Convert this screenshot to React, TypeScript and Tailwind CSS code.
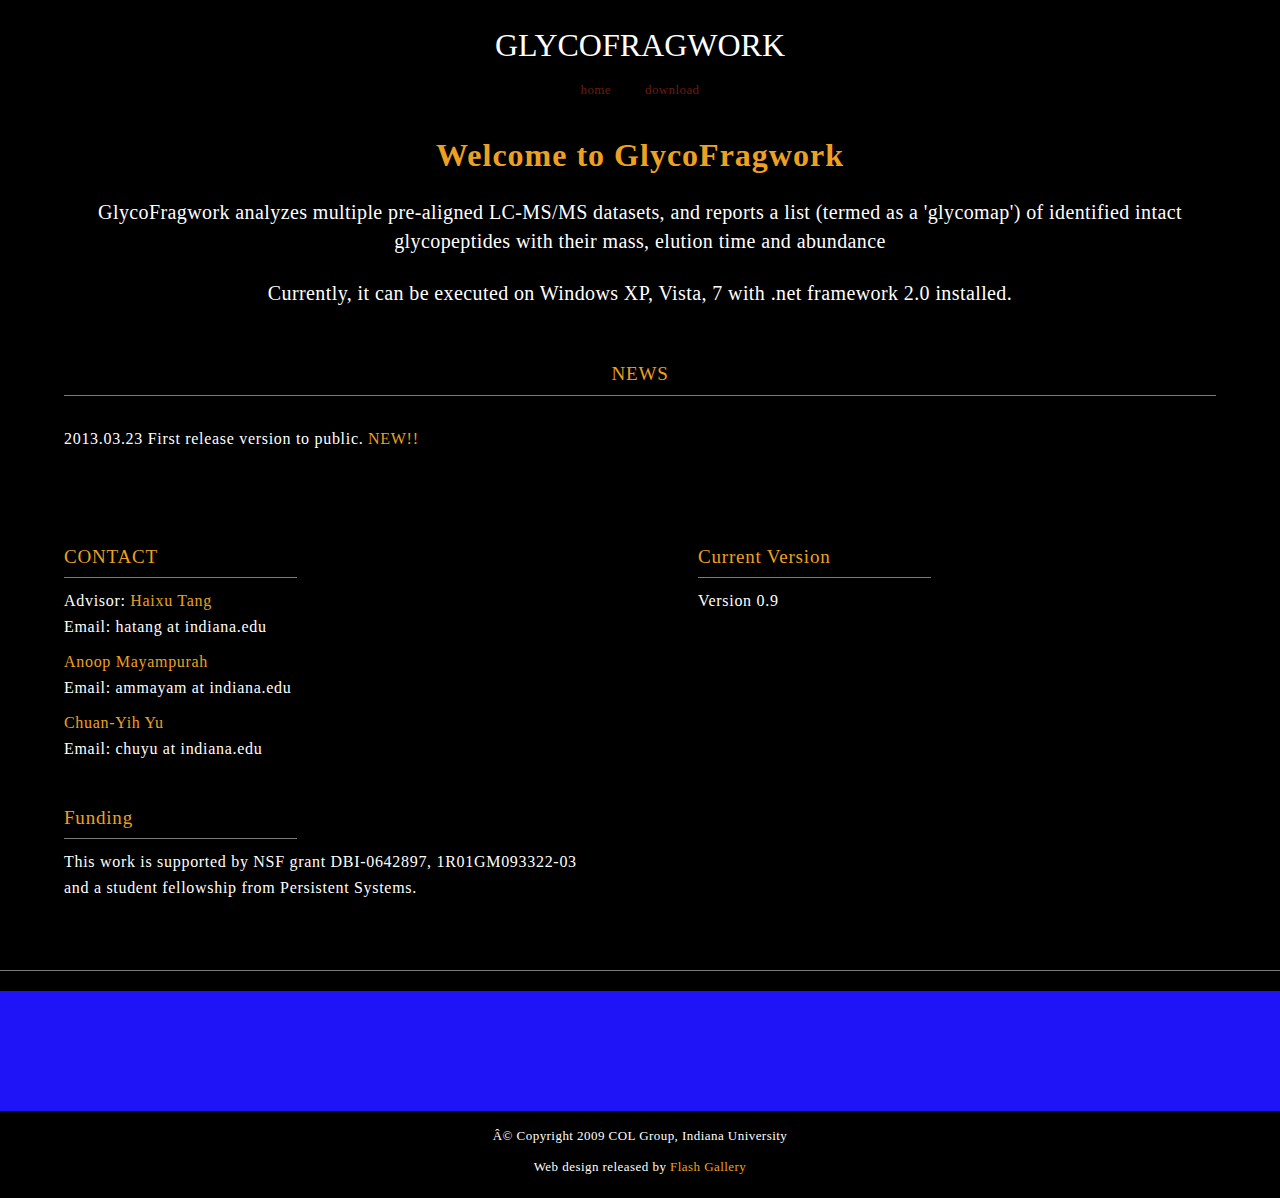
import React from "react";

const serif = { fontFamily: '"Liberation Serif", "DejaVu Serif", serif' };

function SectionTitle({ children }: { children: React.ReactNode }) {
  return (
    <div>
      <h3 className="text-[19px] leading-[24px] tracking-[0.8px] text-[#eda021]">{children}</h3>
      <div className="mt-[8px] h-px w-[233px] bg-[#7a7a7a]" />
    </div>
  );
}

export default function App() {
  return (
    <div className="min-h-[1198px] bg-black text-white" style={serif}>
      <header className="pt-[25px] text-center">
        <h1 className="text-[32px] leading-[40px] text-white">GLYCOFRAGWORK</h1>
        <nav className="mt-[15px] flex justify-center gap-[34px] text-[13px] leading-[20px] tracking-[0.4px] text-[#6b1d12]">
          <a href="#">home</a>
          <a href="#">download</a>
        </nav>
      </header>

      <main className="mx-[64px]">
        <section className="mt-[35px] text-center">
          <h2 className="text-[32px] font-bold leading-[40px] tracking-[1px] text-[#eda021]">Welcome to GlycoFragwork</h2>
          <p className="mt-[23px] text-[20px] leading-[29px] tracking-[0.4px]">
            GlycoFragwork analyzes multiple pre-aligned LC-MS/MS datasets, and reports a list (termed as a 'glycomap') of identified intact
            <br />
            glycopeptides with their mass, elution time and abundance
          </p>
          <p className="mt-[23px] text-[20px] leading-[29px] tracking-[0.4px]">
            Currently, it can be executed on Windows XP, Vista, 7 with .net framework 2.0 installed.
          </p>
        </section>

        <section className="mt-[54px]">
          <h3 className="text-center text-[19px] leading-[24px] tracking-[0.8px] text-[#eda021]">NEWS</h3>
          <div className="mt-[9px] h-px bg-[#7a7a7a]" />
          <p className="mt-[31px] text-[16px] leading-[24px] tracking-[0.7px]">
            2013.03.23 First release version to public. <span className="text-[#eda021]">NEW!!</span>
          </p>
        </section>

        <section className="mt-[94px] grid grid-cols-[634px_1fr]">
          <div>
            <SectionTitle>CONTACT</SectionTitle>
            <div className="mt-[10px] text-[16px] leading-[26px] tracking-[0.7px]">
              <p>
                Advisor: <a className="text-[#eda021]" href="#">Haixu Tang</a>
                <br />
                Email: hatang at indiana.edu
              </p>
              <p className="mt-[9px]">
                <a className="text-[#eda021]" href="#">Anoop Mayampurah</a>
                <br />
                Email: ammayam at indiana.edu
              </p>
              <p className="mt-[9px]">
                <a className="text-[#eda021]" href="#">Chuan-Yih Yu</a>
                <br />
                Email: chuyu at indiana.edu
              </p>
            </div>

            <div className="mt-[44px]">
              <SectionTitle>Funding</SectionTitle>
              <p className="mt-[10px] text-[16px] leading-[26px] tracking-[0.7px]">
                This work is supported by NSF grant DBI-0642897, 1R01GM093322-03
                <br />
                and a student fellowship from Persistent Systems.
              </p>
            </div>
          </div>
          <div>
            <SectionTitle>Current Version</SectionTitle>
            <p className="mt-[10px] text-[16px] leading-[26px] tracking-[0.7px]">Version 0.9</p>
          </div>
        </section>
      </main>

      <footer className="mt-[69px]">
        <div className="h-px bg-[#7a7a7a]" />
        <div className="mt-[20px] h-[120px] bg-[#1f14f8]" />
        <div className="pb-[21px] pt-[15px] text-center text-[13px] leading-[20px] tracking-[0.45px]">
          <p>Â© Copyright 2009 COL Group, Indiana University</p>
          <p className="mt-[11px]">
            Web design released by <a className="text-[#eda021]" href="#">Flash Gallery</a>
          </p>
        </div>
      </footer>
    </div>
  );
}
